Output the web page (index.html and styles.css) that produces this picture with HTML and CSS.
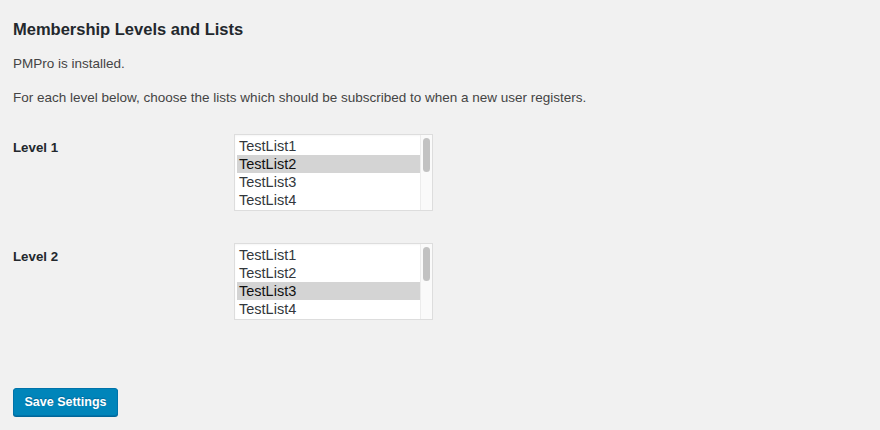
FILE: index.html
```html
<!DOCTYPE html>
<html>
<head>
<meta charset="utf-8">
<link rel="stylesheet" href="styles.css">
</head>
<body>
<div class="wrap">
  <h2 class="title">Membership Levels and Lists</h2>
  <p class="note">PMPro is installed.</p>
  <p class="note">For each level below, choose the lists which should be subscribed to when a new user registers.</p>
  <div class="form-table">
    <div class="row">
      <div class="label">Level 1</div>
      <div class="field">
        <div class="listbox">
          <ul class="options">
            <li>TestList1</li>
            <li class="selected">TestList2</li>
            <li>TestList3</li>
            <li>TestList4</li>
          </ul>
          <div class="scroll"><div class="thumb"></div></div>
        </div>
      </div>
    </div>
    <div class="row">
      <div class="label">Level 2</div>
      <div class="field">
        <div class="listbox">
          <ul class="options">
            <li>TestList1</li>
            <li>TestList2</li>
            <li class="selected">TestList3</li>
            <li>TestList4</li>
          </ul>
          <div class="scroll"><div class="thumb"></div></div>
        </div>
      </div>
    </div>
  </div>
  <div class="submit">
    <button class="button-primary" type="button">Save Settings</button>
  </div>
</div>
</body>
</html>
```

FILE: styles.css
```css
html, body {
  margin: 0;
  padding: 0;
  background: #f1f1f1;
}
body {
  font-family: "Liberation Sans", Arial, sans-serif;
  font-size: 13.5px;
  color: #444;
  height: 430px;
  overflow: hidden;
}
.wrap {
  padding: 0 13px;
}
.title {
  margin: 0;
  padding-top: 18px;
  font-size: 16.5px;
  font-weight: bold;
  color: #23282d;
  line-height: 22px;
}
.note {
  margin: 0;
  line-height: 20px;
}
.title + .note {
  margin-top: 14px;
}
.note + .note {
  margin-top: 14px;
}
.form-table {
  margin-top: 6px;
  display: flex;
  flex-direction: column;
}
.row {
  display: grid;
  grid-template-columns: 221px 199px;
  padding: 20px 0 32px;
}
.row + .row {
  padding-top: 0;
  padding-bottom: 68px;
}
.label {
  font-size: 13.3px;
  font-weight: bold;
  color: #23282d;
  padding-top: 6px;
  line-height: 16px;
}
.listbox {
  width: 199px;
  height: 77px;
  box-sizing: border-box;
  border: 1px solid #ddd;
  background: #fff;
  box-shadow: inset 0 1px 2px rgba(0,0,0,0.04);
  display: flex;
}
.options {
  list-style: none;
  margin: 0;
  padding: 2px 0 0 2px;
  flex: 1;
  font-size: 14.5px;
  color: #32373c;
}
.options li {
  height: 18px;
  line-height: 18px;
  padding-left: 2px;
}
.options li.selected {
  background: #d4d4d4;
  color: #111;
}
.scroll {
  width: 12px;
  border-left: 1px solid #ececec;
  background: #fafafa;
  padding: 3px 2px 0 2px;
  box-sizing: border-box;
}
.thumb {
  width: 7px;
  height: 34px;
  border-radius: 4px;
  background: #c2c2c2;
}
.button-primary {
  font-family: "Liberation Sans", Arial, sans-serif;
  font-size: 12.5px;
  font-weight: bold;
  white-space: nowrap;
  height: 28px;
  width: 105px;
  padding: 0 0 1px;
  color: #fff;
  background: #0085ba;
  border: 1px solid #0073aa;
  border-radius: 3px;
  box-shadow: 0 1px 0 #006799;
  text-shadow: 0 -1px 1px #006799;
  line-height: 26px;
}
```
